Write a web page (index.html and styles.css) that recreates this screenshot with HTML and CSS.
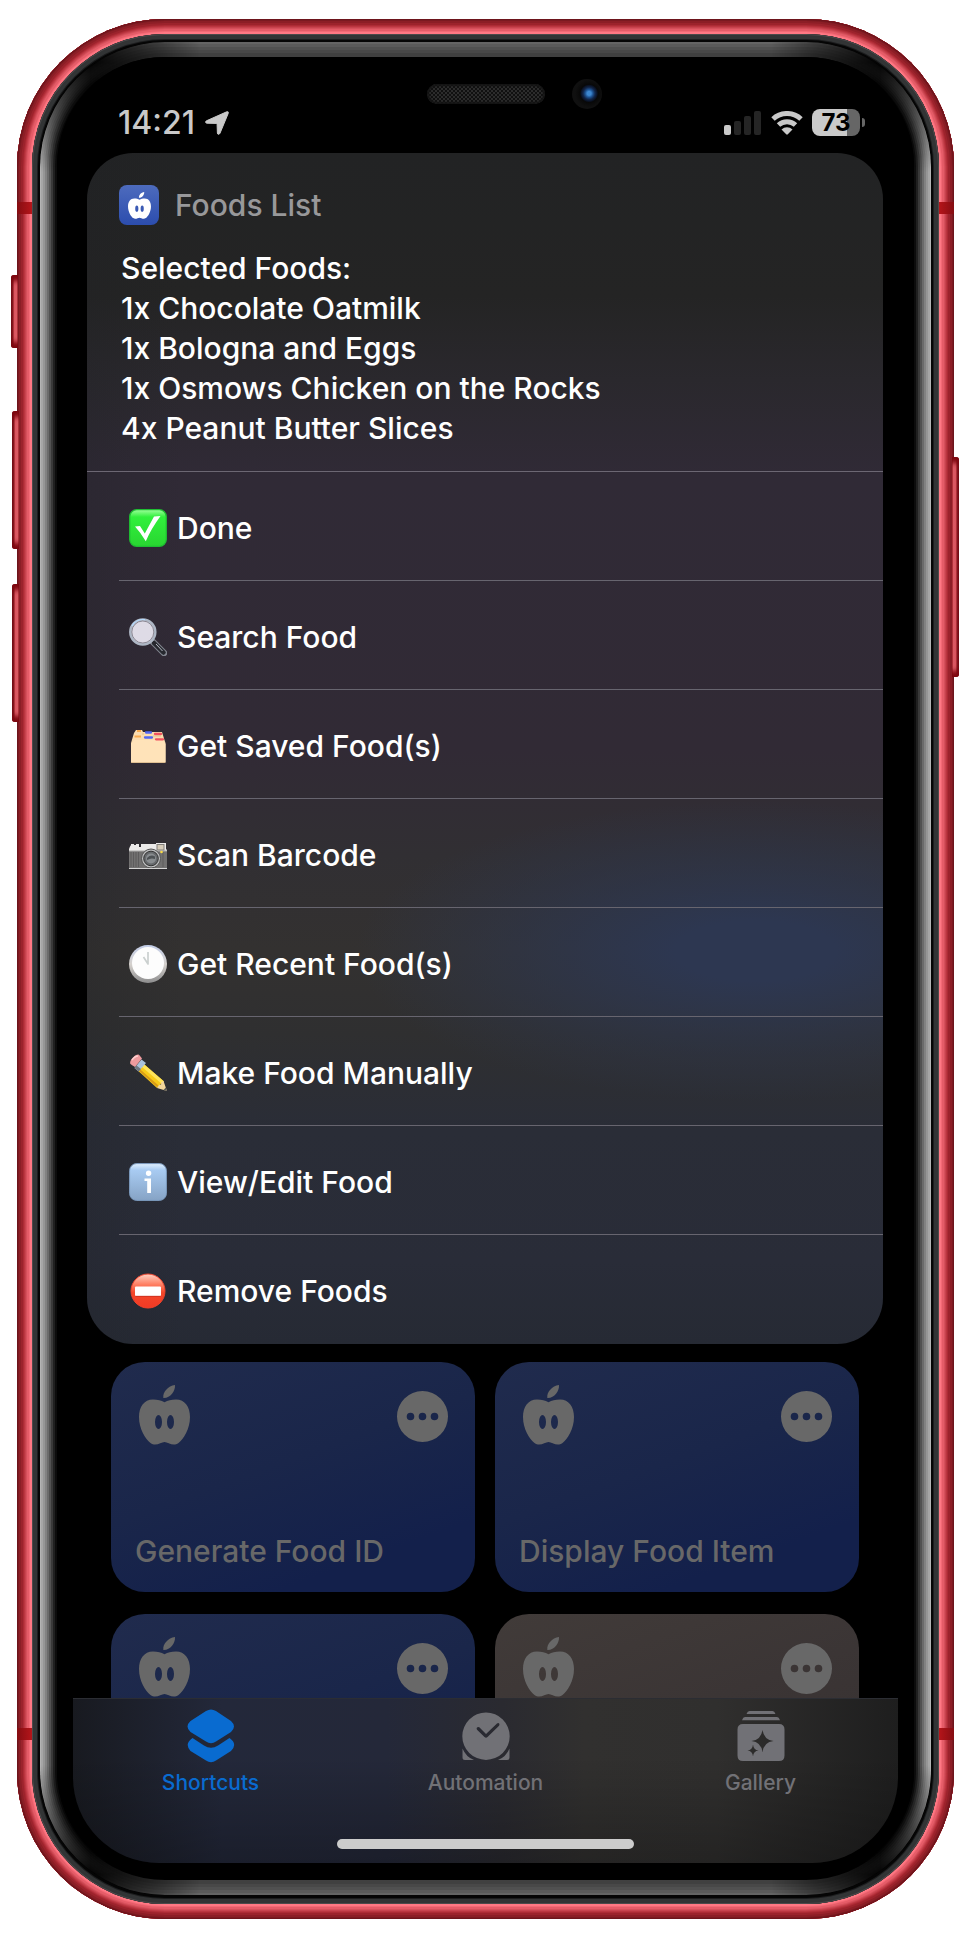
FILE: index.html
```html
<!DOCTYPE html>
<html lang="en">
<head>
<meta charset="utf-8">
<meta name="viewport" content="width=device-width, initial-scale=1">
<title>Foods List</title>
<link rel="stylesheet" href="styles.css">
</head>
<body>
<svg class="defs" aria-hidden="true">
  <symbol id="apple" viewBox="0 0 51 60">
    <path d="M24.300 13C23.500 7 29 1 36 0C36.500 6 31 13.500 24.300 13Z"/>
    <path fill-rule="evenodd" d="M25.500 17.300C29 15.500 32 14.500 37 14.500C46 14.500 51 22 51 32C51 44 44.500 54 39.500 58C34 62 29 57 25.500 57C22 57 17 62 11.500 58C6.500 54 0 44 0 32C0 22 5 14.500 14 14.500C19 14.500 22 15.500 25.500 17.300ZM19.500 30A3.500 7 0 0 0 19.500 44A3.500 7 0 0 0 19.500 30ZM31.500 30A3.500 7 0 0 0 31.500 44A3.500 7 0 0 0 31.500 30Z"/>
  </symbol>
  <symbol id="more" viewBox="0 0 51 51">
    <path fill-rule="evenodd" d="M25.500 0A25.500 25.500 0 0 1 25.500 51A25.500 25.500 0 0 1 25.500 0ZM13.500 21.700a3.800 3.800 0 0 0 0 7.600a3.800 3.800 0 0 0 0-7.600ZM25.500 21.700a3.800 3.800 0 0 0 0 7.600a3.800 3.800 0 0 0 0-7.600ZM37.500 21.700a3.800 3.800 0 0 0 0 7.600a3.800 3.800 0 0 0 0-7.600Z"/>
  </symbol>
</svg>

<div class="phone">
  <span class="side mute"></span>
  <span class="side vol-up"></span>
  <span class="side vol-down"></span>
  <span class="side power"></span>
  <div class="frame">
    <span class="antenna top-left"></span>
    <span class="antenna top-right"></span>
    <span class="antenna bottom-left"></span>
    <span class="antenna bottom-right"></span>
    <div class="band">
      <div class="bezel">
        <div class="glass">
          <div class="notch">
            <span class="speaker"></span>
            <span class="camera"></span>
          </div>
          <div class="status">
            <span class="time">14:21</span>
            <svg class="locate" viewBox="0 0 24 24" aria-hidden="true"><path d="M1.500 9.800L21.700 .8C23 .3 23.700 1 23.200 2.400L15 22.200C14.300 23.800 12.500 23.700 12.400 22L12.100 13.400Q12.100 12.400 11.100 12.400L1.800 12.200C.2 12 .2 10.400 1.500 9.800Z"/></svg>
            <svg class="signal" viewBox="0 0 37 24" aria-hidden="true"><rect class="on" y="14" width="7" height="10" rx="2"/><rect x="10" y="10" width="7" height="14" rx="2"/><rect x="20" y="5" width="7" height="19" rx="2"/><rect x="30" width="7" height="24" rx="2"/></svg>
            <svg class="wifi" viewBox="0 0 32 24" aria-hidden="true"><path d="M2 8A20.500 20.500 0 0 1 30 8M7.500 14A12.500 12.500 0 0 1 24.500 14" /><path class="dot" d="M10.500 18.500A8 8 0 0 1 21.500 18.500L16.800 23.300Q16 24 15.200 23.300Z"/></svg>
            <span class="battery">73</span>
          </div>

          <main class="sheet">
            <header class="sheet-head">
              <span class="app-icon"><svg aria-hidden="true"><use href="#apple"/></svg></span>
              <h1>Foods List</h1>
            </header>
            <p class="summary">Selected Foods:<br>1x Chocolate Oatmilk<br>1x Bologna and Eggs<br>1x Osmows Chicken on the Rocks<br>4x Peanut Butter Slices</p>
            <ul class="menu">
              <li><button type="button">
                <svg viewBox="0 0 38 38" aria-hidden="true"><defs><linearGradient id="g1" x2="0" y2="1"><stop stop-color="#9dff9b"/><stop offset=".2" stop-color="#31f03c"/><stop offset="1" stop-color="#29d631"/></linearGradient></defs><rect x=".7" y=".7" width="36.600" height="36.600" rx="7" fill="url(#g1)" stroke="#1fbf33" stroke-width="1.300"/><path d="M6 17.500L11 17L15.800 24.500L25 7.500L31.500 7Q22 20 16.800 32.300Q12 24 6 17.500Z" fill="#fff"/></svg>
                <span>Done</span></button></li>
              <li><button type="button">
                <svg viewBox="0 0 38 38" aria-hidden="true"><path d="M24 24L35 35" stroke="#81858f" stroke-width="6.500" stroke-linecap="round"/><path d="M25 25L34.500 34.500" stroke="#26282e" stroke-width="4.500" stroke-linecap="round"/><path d="M27 26L33.500 33" stroke="#b9bdc8" stroke-width="1"/><circle cx="13.800" cy="14" r="12.500" fill="#dedbe6" stroke="#aeb7c5" stroke-width="2.500"/><circle cx="13.800" cy="14" r="11" fill="none" stroke="#77737f" stroke-width=".8"/><path d="M3 8A12.500 12.500 0 0 1 16 1.700" fill="none" stroke="#b5dbff" stroke-width="1.200"/></svg>
                <span>Search Food</span></button></li>
              <li><button type="button">
                <svg viewBox="0 0 38 38" aria-hidden="true"><path d="M2 35V16L5 6L7 3H13L14 5H33L35.500 13L36.500 16V35Q36.500 36 35 36H3Q2 36 2 35Z" fill="#fadcae"/><path d="M2 17L5 13H34L36.500 17V35H2Z" fill="#ffe3b9"/><path d="M8 4H12M5.500 9.500H12" stroke="#f8aa4f" stroke-width="2.200"/><path d="M17 5.500H22M16 10.500H23" stroke="#5267f2" stroke-width="2.300" stroke-linecap="round"/><path d="M26 7H32M27 12.300H34" stroke="#f2515e" stroke-width="2.300" stroke-linecap="round"/><path d="M13 7H15M24 9H32M2 35.500H36.500" stroke="#d9b98b" stroke-width=".8"/></svg>
                <span>Get Saved Food(s)</span></button></li>
              <li><button type="button">
                <svg viewBox="0 0 38 38" aria-hidden="true"><path d="M0 13Q1 10 2 9V8H5V9H7V8H10V11H12V8H27V7H37V13L38 14V33H0Z" fill="#ecebea"/><path d="M0 15H38V32H0Z" fill="#727171"/><path d="M2 16V31M4.500 16V31M7 16V31M9.500 16V31M34 16V31" stroke="#5d5c5d"/><path d="M0 15H38" stroke="#aaa"/><rect x="28" y="8.500" width="7" height="5.500" fill="#d5cbb8" stroke="#817f7b"/><circle cx="32.500" cy="16" r="1.300" fill="#f9db47"/><circle cx="22" cy="22.500" r="9.500" fill="#bcbdbe" stroke="#555"/><circle cx="22" cy="22.500" r="7.300" fill="#66696c" stroke="#333"/><circle cx="22" cy="22.500" r="5" fill="#898d90"/><path d="M18 22Q22 18 26 20.500L26 23Q22 21.500 18 24Z" fill="#4d5154"/><path d="M0 32.500H38" stroke="#d4d4d4"/></svg>
                <span>Scan Barcode</span></button></li>
              <li><button type="button">
                <svg viewBox="0 0 38 38" aria-hidden="true"><defs><linearGradient id="g5" x2="0" y2="1"><stop stop-color="#c3cee9"/><stop offset=".5" stop-color="#d6d2ce"/><stop offset="1" stop-color="#8c8c8d"/></linearGradient></defs><circle cx="19" cy="19" r="19" fill="url(#g5)"/><circle cx="19" cy="18" r="16" fill="#fdfdfd"/><path d="M19 7V19L14.500 12" fill="none" stroke="#cbd0cf" stroke-width="1.700" stroke-linejoin="round"/></svg>
                <span>Get Recent Food(s)</span></button></li>
              <li><button type="button">
                <svg viewBox="0 0 38 38" aria-hidden="true"><path d="M12 7.500L34.500 27L28 34L6 14Z" fill="#f8cb19"/><path d="M13.500 9L35 27.500L33 30L10 10.500Z" fill="#ffe45a"/><path d="M8 15L28 33L29.500 31.500L8.500 13Z" fill="#d99b18"/><path d="M34.500 27L38 37L28 34L30 31L32 30.500L32.500 28Z" fill="#f2d69b"/><path d="M38 37L34.500 36L36.800 33.500Z" fill="#555"/><path d="M5.500 14L12.500 5.500L17 9L9.500 17.500Z" fill="#a9c2db"/><path d="M5.500 14L7.500 11.500L12 15L9.500 17.500Z" fill="#6f7780"/><path d="M1.500 10C-.5 7 6 0 9.500 .5Q10.500 1 13 4.500L6 13Q2.500 11 1.500 10Z" fill="#ee9b9e"/><path d="M3 6Q6 2 9 2" fill="none" stroke="#ffd0d0" stroke-width="1.500"/></svg>
                <span>Make Food Manually</span></button></li>
              <li><button type="button">
                <svg viewBox="0 0 38 38" aria-hidden="true"><defs><linearGradient id="g7" x2="0" y2="1"><stop stop-color="#e2f1ff"/><stop offset=".18" stop-color="#a8cbf2"/><stop offset="1" stop-color="#86a3c5"/></linearGradient></defs><rect x=".6" y=".6" width="36.800" height="36.800" rx="7" fill="url(#g7)" stroke="#7d9cc0"/><circle cx="19.600" cy="10.300" r="2.700" fill="#fff"/><path d="M15.500 15.500H22V30H18.200V18H15.500Z" fill="#fff"/></svg>
                <span>View/Edit Food</span></button></li>
              <li><button type="button">
                <svg viewBox="0 0 38 38" aria-hidden="true"><defs><linearGradient id="g8" x2="0" y2="1"><stop stop-color="#ffd2c4"/><stop offset=".3" stop-color="#ff8165"/><stop offset=".55" stop-color="#f34729"/><stop offset="1" stop-color="#f23a25"/></linearGradient></defs><circle cx="19" cy="19" r="17" fill="url(#g8)" stroke="#f0432c"/><rect x="6" y="14.500" width="26" height="9.500" rx="1" fill="#fff"/><path d="M6.500 24.300H31.500" stroke="#c52d1d" stroke-width=".8"/></svg>
                <span>Remove Foods</span></button></li>
            </ul>
          </main>

          <section class="tiles" aria-label="Shortcuts">
            <article class="tile">
              <svg class="tile-icon" aria-hidden="true"><use href="#apple"/></svg>
              <button type="button" aria-label="More"><svg aria-hidden="true"><use href="#more"/></svg></button>
              <h2>Generate Food ID</h2>
            </article>
            <article class="tile">
              <svg class="tile-icon" aria-hidden="true"><use href="#apple"/></svg>
              <button type="button" aria-label="More"><svg aria-hidden="true"><use href="#more"/></svg></button>
              <h2>Display Food Item</h2>
            </article>
            <article class="tile">
              <svg class="tile-icon" aria-hidden="true"><use href="#apple"/></svg>
              <button type="button" aria-label="More"><svg aria-hidden="true"><use href="#more"/></svg></button>
            </article>
            <article class="tile brown">
              <svg class="tile-icon" aria-hidden="true"><use href="#apple"/></svg>
              <button type="button" aria-label="More"><svg aria-hidden="true"><use href="#more"/></svg></button>
            </article>
          </section>

          <footer class="bottom">
            <nav class="tabs">
              <a class="active" href="#shortcuts">
                <svg viewBox="0 0 48 54" aria-hidden="true"><path d="M19 2Q24-1 29 2L44 12Q50 17.500 44 23L29 32.500Q24 36 19 32.500L3.500 23Q-2.500 17.500 3.500 12Z"/><path d="M5.500 29L17 36.500Q24 41 31 36.500L42.500 29Q51 35 44 42L29 51.500Q24 55 19 51.500L3.500 42Q-3 35 5.500 29Z"/></svg>
                Shortcuts</a>
              <a href="#automation">
                <svg viewBox="0 0 48 54" aria-hidden="true"><path fill-rule="evenodd" d="M24 3.500A23.700 23.700 0 0 1 24 50.900A23.700 23.700 0 0 1 24 3.500ZM17.300 18.300L24 25L35 14.500Q36.500 13.500 37.300 14.800Q37.800 16 36.800 17L25.500 28Q24 29.300 22.500 28L15 20.700Q14.200 19.500 15 18.500Q16 17.500 17.300 18.300Z"/><path d="M.5 39.500Q4 48 12 51H3Q.5 51 .5 48.500ZM47.500 39.500Q44 48 36 51H45Q47.500 51 47.500 48.500Z"/></svg>
                Automation</a>
              <a href="#gallery">
                <svg viewBox="0 0 48 54" aria-hidden="true"><path d="M9.500 5Q10.500 2 12.500 2H35.500Q37.500 2 38.500 5ZM5 11.200Q6 8 8 8H40Q42 8 43 11.200Z"/><path fill-rule="evenodd" d="M6 15H42Q47.500 15 47.500 20.500V46.500Q47.500 52 42 52H6Q.5 52 .5 46.500V20.500Q.5 15 6 15ZM25.500 21Q24 31 14.500 32Q24 33 25.500 43Q27 33 36.500 32Q27 31 25.500 21ZM16 35.500Q15.500 41 10.500 41.500Q15.500 42 16 47.500Q16.500 42 21.500 41.500Q16.500 41 16 35.500Z"/></svg>
                Gallery</a>
            </nav>
            <div class="home-bar"></div>
          </footer>
        </div>
      </div>
    </div>
  </div>
</div>
</body>
</html>
```
FILE: styles.css
```css
* { box-sizing: border-box; }

body {
  margin: 0;
  background: #fff;
  font-family: Inter, "Liberation Sans", sans-serif;
}

button { padding: 0; border: 0; background: none; color: inherit; font: inherit; cursor: pointer; }
.defs { display: none; }

/* Hardware */
.phone { position: relative; padding: 19px 16px 24px 17px; }

.frame {
  position: relative;
  padding: 15px;
  border-radius: 148px;
  background: #ff7884;
  box-shadow:
    inset 0 0 0 1px #6d141b,
    inset 0 0 0 2px #7b1a21,
    inset 0 0 0 4px #8c1e26,
    inset 0 0 0 6px #9c232c,
    inset 0 0 0 7px #ad2b35,
    inset 0 0 0 8px #bb3640,
    inset 0 0 0 9px #c8434e,
    inset 0 0 0 10px #d6505b,
    inset 0 0 0 12px #e55c68,
    inset 0 0 0 13px #f36a76;
}

.antenna { position: absolute; width: 15px; height: 12px; background: linear-gradient(90deg, #850d12, #b5151a); }
.top-left { top: 183px; left: 0; }
.top-right { top: 183px; right: 0; transform: scaleX(-1); }
.bottom-left { bottom: 179px; left: 0; }
.bottom-right { bottom: 179px; right: 0; transform: scaleX(-1); }

.side { position: absolute; z-index: 1; width: 7px; background: linear-gradient(90deg, #6d0e15, #8c1820 28%, #d9525c 45%, #e0606a 80%, #a3242d); box-shadow: inset 0 9px 5px -3px #7d0810, inset 0 -9px 5px -3px #7d0810; }
.mute { top: 275px; left: 11px; height: 73px; border-radius: 3px 0 0 3px; }
.vol-up { top: 411px; left: 12px; height: 138px; border-radius: 3px 0 0 3px; }
.vol-down { top: 584px; left: 12px; height: 138px; border-radius: 3px 0 0 3px; }
.power { top: 457px; right: 11px; height: 220px; border-radius: 3px 0 0 3px; transform: scaleX(-1); }

.band {
  padding: 8px 8px 9px;
  border-radius: 133px;
  background: #050505;
  box-shadow: inset 0 0 0 1px #4c4a4b, inset 0 0 0 5px #323435, inset 0 0 0 6px #1c1d1e;
}

.bezel { position: relative; padding: 15px 17px 16px; border-radius: 125px; background: #000; }
.bezel::before, .bezel::after { content: ""; position: absolute; inset: 0; border-radius: 125px; }
.bezel::before {
  box-shadow:
    inset 0 0 0 1px #b4b4b4, inset 0 0 0 3px #a6a6a6, inset 0 0 0 5px #969696,
    inset 0 0 0 7px #828282, inset 0 0 0 9px #6b6b6b, inset 0 0 0 11px #525252,
    inset 0 0 0 13px #393939, inset 0 0 0 15px #202020, inset 0 0 0 17px #0c0c0c;
  mask-image: linear-gradient(transparent 20px, #000 130px, #000 calc(100% - 130px), transparent calc(100% - 20px));
}
.bezel::after {
  box-shadow:
    inset 0 0 0 2px #646464, inset 0 0 0 5px #5a5a5a, inset 0 0 0 8px #505050,
    inset 0 0 0 11px #484848, inset 0 0 0 15px #404040;
  mask-image: linear-gradient(90deg, transparent 50px, #000 160px, #000 calc(100% - 160px), transparent calc(100% - 50px));
}

.glass {
  position: relative;
  z-index: 1;
  padding: 22px 16px 16px 16px;
  border-radius: 108px;
  background: #000;
}

.notch { display: grid; grid-template-columns: 1fr 118px 1fr; align-items: center; height: 30px; }
.speaker {
  grid-column: 2;
  height: 20px;
  border-radius: 10px;
  background: repeating-conic-gradient(#2c2c2c 0 25%, #101010 0 50%) 0 0 / 4px 4px;
  box-shadow: inset 0 0 2px 2px #141414;
}
.camera {
  width: 30px;
  height: 30px;
  margin-left: 27px;
  border-radius: 50%;
  background: radial-gradient(circle at 57% 48%, #3d87d0 0 2px, #1c4f8d 4px, #12264a 6px, #0a1224 8px, #080808 9px, #101010 14px);
}

/* Status row */
.status { display: flex; align-items: center; height: 27px; padding: 0 33px 0 45px; color: #c9c9c9; }
.time { width: 79px; font-size: 32px; font-weight: 500; line-height: 27px; }
.locate { width: 24px; height: 24px; margin-left: 8px; fill: #c9c9c9; stroke: #c9c9c9; stroke-width: 1; stroke-linejoin: round; overflow: visible; }
.signal { width: 37px; height: 24px; margin-left: auto; fill: #252525; }
.signal .on { fill: #c9c9c9; }
.wifi { width: 32px; height: 24px; margin-left: 10px; fill: none; stroke: #c9c9c9; stroke-width: 5; }
.wifi .dot { fill: #c9c9c9; stroke: none; }
.battery {
  position: relative;
  width: 48px;
  height: 27px;
  margin: 0 5px 0 9px;
  border-radius: 8px;
  background: linear-gradient(90deg, #c9c9c9 73%, #666 73%);
  color: #000;
  font-size: 24px;
  font-weight: 700;
  line-height: 27px;
  text-align: center;
}
.battery::after { content: ""; position: absolute; top: 9px; right: -5px; width: 3px; height: 9px; border-radius: 0 4px 4px 0; background: #666; }

/* Menu sheet */
.sheet {
  margin: 17px 15px 18px 14px;
  overflow: hidden;
  border-radius: 46px;
  color: #fff;
  font-size: 30px;
  font-weight: 500;
  background:
    radial-gradient(ellipse 400px 150px at 84% 67%, #2d3751 20%, #2d375180 60%, #2d375100),
    linear-gradient(90deg, #1f212540, #1f212500 12%),
    linear-gradient(#222324, #242424 12%, #2a282d 19%, #302a36 27%, #312a35 50%, #312f33 59%, #333130 67%, #2f2f30 74%, #2a2d37 82%, #292c38 93%, #262a34);
}
.sheet-head { display: flex; align-items: center; gap: 16px; padding: 32px 32px 0; }
.app-icon { display: grid; place-items: center; width: 40px; height: 40px; border-radius: 8px; background: linear-gradient(#4d6bbd, #2c4dae); }
.app-icon svg { width: 23px; height: 27px; fill: #fff; }
h1 { margin: 0; color: #98989a; font-size: 30px; font-weight: 500; line-height: 40px; }
.summary { margin: 0; padding: 23px 34px; line-height: 40px; border-bottom: 1px solid #6c6773; }
.menu { margin: 0; padding: 0 0 1px 32px; list-style: none; }
.menu li + li { border-top: 1px solid #67656f; }
.menu button { display: flex; align-items: center; gap: 10px; width: 100%; height: 108px; padding: 4px 10px 0; text-align: left; }
.menu button svg { flex: none; width: 38px; height: 38px; }

/* Shortcut tiles */
.tiles {
  display: grid;
  grid-template-columns: 1fr 1fr;
  grid-auto-rows: 230px;
  gap: 22px 20px;
  height: 336px;
  padding: 0 39px 0 38px;
  overflow: hidden;
}
.tile {
  display: grid;
  grid-template-columns: 1fr auto;
  grid-template-rows: auto 1fr;
  padding: 23px 27px 23px 24px;
  border-radius: 34px;
  color: #686868;
  fill: #686868;
  background: linear-gradient(160deg, #202b4d, #1a264a 45%, #13204b 80%);
}
.brown { background: linear-gradient(160deg, #413b39, #3b3535 45%, #352f2f); }
.tile-icon { width: 51px; height: 60px; margin-left: 4px; }
.tile button { width: 51px; height: 51px; margin-top: 6px; }
.tile button svg { display: block; width: 51px; height: 51px; }
.tile h2 { grid-column: 1 / -1; align-self: end; margin: 0; font-size: 30px; font-weight: 500; line-height: 36px; }

/* Tab bar */
.bottom {
  padding: 10px 0 14px;
  border-radius: 0 0 86px 86px;
  border-top: 1px solid #2b2d33;
  background:
    linear-gradient(#0000 35%, #00000040),
    linear-gradient(90deg, #181a20, #23283a 18%, #242839 38%, #2a2a30 52%, #31302f 62%, #302f2e 78%, #1e1e1e);
}
.tabs { display: grid; grid-template-columns: repeat(3, 1fr); }
.tabs a { display: grid; justify-items: center; gap: 8px; color: #717176; fill: #717176; font-size: 21px; font-weight: 500; line-height: 24px; text-decoration: none; }
.tabs svg { width: 48px; height: 54px; }
.tabs .active { color: #096bd0; fill: #096bd0; }
.home-bar { width: 36%; height: 10px; margin: 44px auto 0; border-radius: 5px; background: #ccc; }
```
